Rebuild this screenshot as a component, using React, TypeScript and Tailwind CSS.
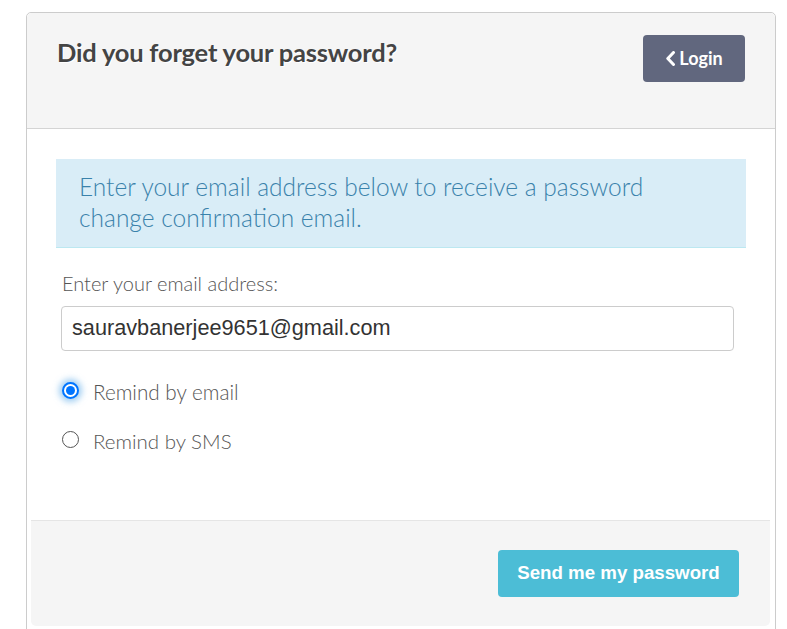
import React from "react";

export default function App() {
  return (
    <div className="min-h-screen bg-white pt-[12px] pl-[26px]" style={{ fontFamily: "Lato, 'Open Sans', sans-serif" }}>
      <div className="w-[750px] border border-[#cccccc] rounded-[5px] flex flex-col pb-[14px]">
        <div className="h-[116px] bg-[#f5f5f5] border-b border-[#d4d4d4] rounded-t-[5px] flex justify-between pl-[30px] pr-[30px]">
          <h2
            className="text-[25.5px] font-bold text-[#444] mt-[24px] leading-[30px] tracking-[-0.2px]"
            style={{ textShadow: "1px 1px 0 #fff" }}
          >
            Did you forget your password?
          </h2>
          <button className="mt-[22px] w-[102px] h-[47px] bg-[#61677e] rounded-[4px] flex items-center justify-center gap-[3px] text-white text-[18px] font-bold">
            <svg width="11" height="15" viewBox="0 0 11 15" fill="none">
              <path d="M8.5 1.5 L2.8 7.5 L8.5 13.5" stroke="white" strokeWidth="3" strokeLinecap="round" strokeLinejoin="round" />
            </svg>
            <span>Login</span>
          </button>
        </div>
        <div className="px-[29px] pt-[30px] h-[391px] flex flex-col">
          <div className="bg-[#d9edf7] border-b border-[#bce8f1] h-[89px] pl-[23px] pt-[12px] text-[#3a82ab] text-[24.5px] leading-[31px] font-light">
            Enter your email address below to receive a password
            <br />
            change confirmation email.
          </div>
          <label className="block mt-[22px] ml-[6px] text-[20px] text-[#555] leading-[26px] font-light">Enter your email address:</label>
          <div className="mt-[10px] ml-[5px] w-[673px] h-[45px] border border-[#cccccc] rounded-[4px] flex items-center pl-[10px] text-[21.7px] text-[#333]" style={{ fontFamily: "'Liberation Sans', Arial, sans-serif" }}>
            sauravbanerjee9651@gmail.com
          </div>
          <div className="mt-[27px] ml-[6px] flex items-center gap-[14px] h-[24px]">
            <span className="w-[17px] h-[17px] rounded-full border-[2px] border-[#0075ff] bg-white flex items-center justify-center shadow-[0_0_6px_3px_rgba(102,175,233,0.6)]">
              <span className="w-[9px] h-[9px] rounded-full bg-[#0075ff]" />
            </span>
            <span className="text-[20.7px] text-[#555] font-light leading-[24px] mt-[4px]">Remind by email</span>
          </div>
          <div className="mt-[25px] ml-[6px] flex items-center gap-[14px] h-[24px]">
            <span className="w-[17px] h-[17px] rounded-full border border-[#555] bg-white" />
            <span className="text-[20.5px] text-[#555] font-light leading-[24px] mt-[4px]">Remind by SMS</span>
          </div>
        </div>
        <div className="ml-[4px] mr-[5px] h-[106px] bg-[#f5f5f5] border-t border-[#e5e5e5] rounded-b-[5px] flex justify-end items-start pr-[31px] pt-[29px]">
          <button
            className="w-[241px] h-[47px] bg-[#4cbdd6] rounded-[4px] text-white text-[18.7px] font-bold"
            style={{ fontFamily: "'Liberation Sans', Arial, sans-serif" }}
          >
            Send me my password
          </button>
        </div>
      </div>
    </div>
  );
}
